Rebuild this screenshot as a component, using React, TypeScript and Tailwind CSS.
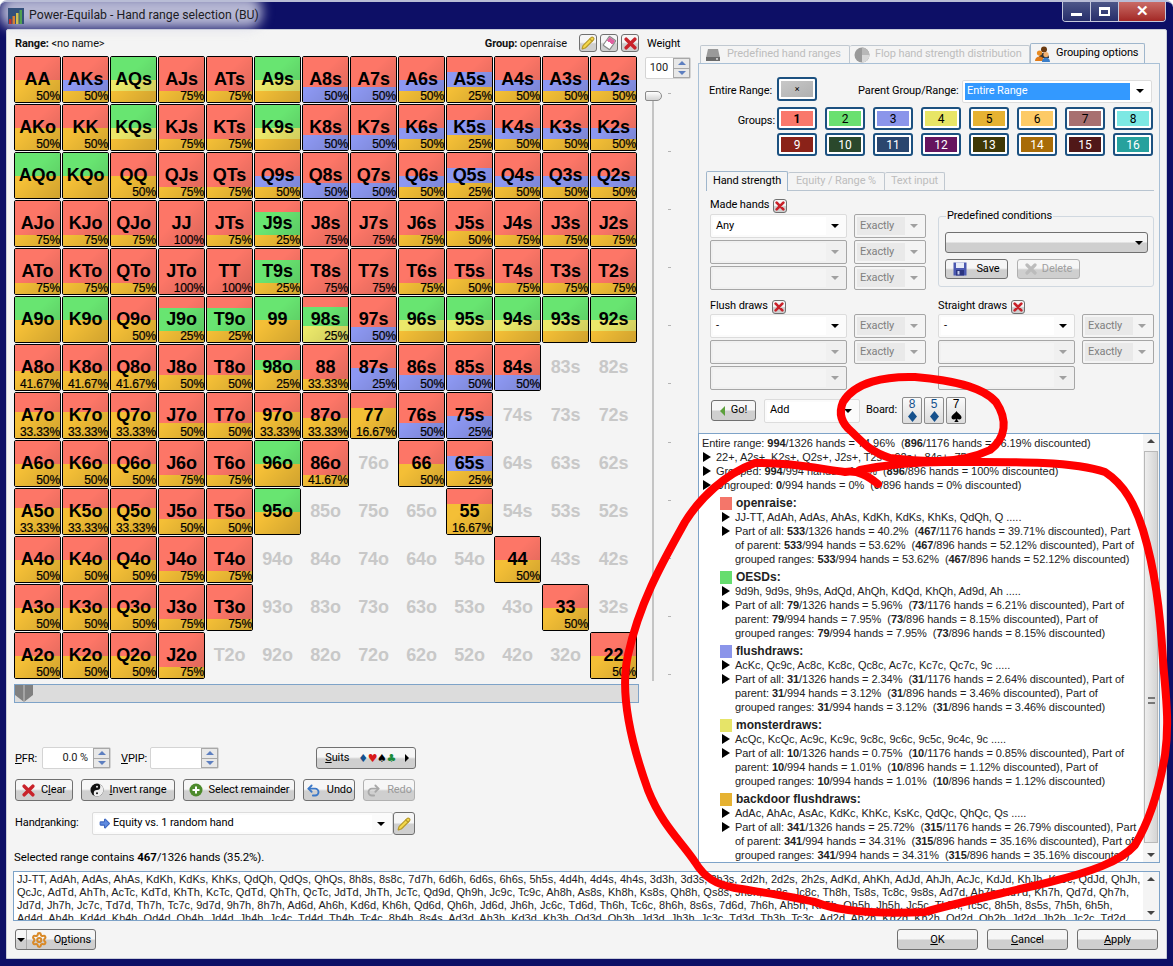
import type { ReactNode } from 'react';
import { ArrowBigRight, Pencil, Redo2, Settings, Undo2 } from 'lucide-react';

const BAND: Record<string, string> = {
  R: 'bg-[#fd7667]',
  G: 'bg-[#68e571]',
  B: 'bg-[#8d98f2]',
  Y: 'bg-[#ebe86a]',
  O: 'bg-[#f4bf36]',
};

// preset fills for the matrix cells, top to bottom
const FILLS: Record<string, [string, number][]> = {
  a: [['R', 50], ['O', 50]],
  b: [['R', 50], ['B', 25], ['O', 25]],
  c: [['G', 50], ['Y', 25], ['O', 25]],
  d: [['R', 75], ['O', 25]],
  e: [['R', 67], ['B', 33]],
  f: [['R', 33], ['B', 33], ['O', 34]],
  g: [['G', 50], ['O', 50]],
  h: [['R', 100]],
  i: [['R', 25], ['G', 50], ['O', 25]],
  j: [['R', 67], ['O', 33]],
  k: [['R', 57], ['O', 43]],
  l: [['R', 43], ['O', 57]],
  n: [['R', 33], ['O', 67]],
  o: [['R', 50], ['B', 50]],
  p: [['R', 33], ['G', 22], ['O', 45]],
  q: [['R', 22], ['G', 43], ['Y', 35]],
  r: [['R', 55], ['O', 45]],
};

const MATRIX = [
  'AA:50:a AKs:50:b AQs::c AJs:75:d ATs:75:d A9s::c A8s:50:e A7s:50:e A6s:50:b A5s:25:f A4s:50:b A3s:50:b A2s:50:b',
  'AKo:50:a KK:50:a KQs::c KJs:75:d KTs:75:d K9s::c K8s:50:e K7s:50:e K6s:50:b K5s:25:f K4s:50:b K3s:50:b K2s:50:b',
  'AQo::g KQo::g QQ:50:a QJs:75:d QTs:75:d Q9s:50:b Q8s:50:e Q7s:50:e Q6s:50:b Q5s:25:f Q4s:50:b Q3s:50:b Q2s:50:b',
  'AJo:75:d KJo:75:d QJo:75:d JJ:100:h JTs:75:d J9s:25:i J8s:75:h J7s:75:h J6s:75:d J5s:50:j J4s:75:d J3s:75:d J2s:75:d',
  'ATo:75:d KTo:75:d QTo:75:d JTo:100:h TT:100:h T9s:25:i T8s:75:h T7s:75:h T6s:75:d T5s:50:j T4s:75:d T3s:75:d T2s:75:d',
  'A9o::g K9o::g Q9o:50:a J9o:25:i T9o:25:i 99::g 98s:25:q 97s:50:e 96s::c 95s::c 94s::c 93s::c 92s::c',
  'A8o:41.67:k K8o:41.67:k Q8o:41.67:k J8o:50:j T8o:50:j 98o:25:p 88:33.33:d 87s:25:o 86s:50:e 85s:50:e 84s:50:e 83s:: 82s::',
  'A7o:33.33:l K7o:33.33:l Q7o:33.33:l J7o:50:j T7o:50:j 97o:33.33:l 87o:33.33:r 77:16.67:n 76s:50:e 75s:25:o 74s:: 73s:: 72s::',
  'A6o:50:a K6o:50:a Q6o:50:a J6o:75:d T6o:75:d 96o::g 86o:41.67:d 76o:: 66:50:a 65s:25:f 64s:: 63s:: 62s::',
  'A5o:33.33:l K5o:33.33:l Q5o:33.33:l J5o:50:j T5o:50:j 95o::g 85o:: 75o:: 65o:: 55:16.67:n 54s:: 53s:: 52s::',
  'A4o:50:a K4o:50:a Q4o:50:a J4o:75:d T4o:75:d 94o:: 84o:: 74o:: 64o:: 54o:: 44:50:a 43s:: 42s::',
  'A3o:50:a K3o:50:a Q3o:50:a J3o:75:d T3o:75:d 93o:: 83o:: 73o:: 63o:: 53o:: 43o:: 33:50:a 32s::',
  'A2o:50:a K2o:50:a Q2o:50:a J2o:75:d T2o:: 92o:: 82o:: 72o:: 62o:: 52o:: 42o:: 32o:: 22:50:a',
];

const GROUPS = [
  ['1', 'bg-[#f9786b]', 'text-black font-bold'],
  ['2', 'bg-[#6ae070]', 'text-black'],
  ['3', 'bg-[#8b95ea]', 'text-black'],
  ['4', 'bg-[#e8e566]', 'text-black'],
  ['5', 'bg-[#e6b232]', 'text-black'],
  ['6', 'bg-[#fdca66]', 'text-black'],
  ['7', 'bg-[#a87070]', 'text-black'],
  ['8', 'bg-[#7de8e3]', 'text-black'],
  ['9', 'bg-[#8a2218]', 'text-white'],
  ['10', 'bg-[#2a482c]', 'text-white'],
  ['11', 'bg-[#2a466e]', 'text-white'],
  ['12', 'bg-[#65145e]', 'text-white'],
  ['13', 'bg-[#3f3806]', 'text-white'],
  ['14', 'bg-[#a86c08]', 'text-white'],
  ['15', 'bg-[#501818]', 'text-white'],
  ['16', 'bg-[#26a19d]', 'text-white'],
];

const BLOCKS = [
  {
    name: 'openraise:',
    color: 'bg-[#f4766a]',
    hands: 'JJ-TT, AdAh, AdAs, AhAs, KdKh, KdKs, KhKs, QdQh, Q .....',
    lines: [
      'Part of all: *533*/1326 hands = 40.2%  (*467*/1176 hands = 39.71% discounted), Part',
      'of parent: *533*/994 hands = 53.62%  (*467*/896 hands = 52.12% discounted), Part of',
      'grouped ranges: *533*/994 hands = 53.62%  (*467*/896 hands = 52.12% discounted)',
    ],
  },
  {
    name: 'OESDs:',
    color: 'bg-[#66dd6e]',
    hands: '9d9h, 9d9s, 9h9s, AdQd, AhQh, KdQd, KhQh, Ad9d, Ah .....',
    lines: [
      'Part of all: *79*/1326 hands = 5.96%  (*73*/1176 hands = 6.21% discounted), Part of',
      'parent: *79*/994 hands = 7.95%  (*73*/896 hands = 8.15% discounted), Part of',
      'grouped ranges: *79*/994 hands = 7.95%  (*73*/896 hands = 8.15% discounted)',
    ],
  },
  {
    name: 'flushdraws:',
    color: 'bg-[#8b95ea]',
    hands: 'AcKc, Qc9c, Ac8c, Kc8c, Qc8c, Ac7c, Kc7c, Qc7c, 9c .....',
    lines: [
      'Part of all: *31*/1326 hands = 2.34%  (*31*/1176 hands = 2.64% discounted), Part of',
      'parent: *31*/994 hands = 3.12%  (*31*/896 hands = 3.46% discounted), Part of',
      'grouped ranges: *31*/994 hands = 3.12%  (*31*/896 hands = 3.46% discounted)',
    ],
  },
  {
    name: 'monsterdraws:',
    color: 'bg-[#e6e468]',
    hands: 'AcQc, KcQc, Ac9c, Kc9c, 9c8c, 9c6c, 9c5c, 9c4c, 9c .....',
    lines: [
      'Part of all: *10*/1326 hands = 0.75%  (*10*/1176 hands = 0.85% discounted), Part of',
      'parent: *10*/994 hands = 1.01%  (*10*/896 hands = 1.12% discounted), Part of',
      'grouped ranges: *10*/994 hands = 1.01%  (*10*/896 hands = 1.12% discounted)',
    ],
  },
  {
    name: 'backdoor flushdraws:',
    color: 'bg-[#e6b232]',
    hands: 'AdAc, AhAc, AsAc, KdKc, KhKc, KsKc, QdQc, QhQc, Qs .....',
    lines: [
      'Part of all: *341*/1326 hands = 25.72%  (*315*/1176 hands = 26.79% discounted), Part',
      'of parent: *341*/994 hands = 34.31%  (*315*/896 hands = 35.16% discounted), Part of',
      'grouped ranges: *341*/994 hands = 34.31%  (*315*/896 hands = 35.16% discounted)',
    ],
  },
];

const RANGE_TEXT = [
  'JJ-TT, AdAh, AdAs, AhAs, KdKh, KdKs, KhKs, QdQh, QdQs, QhQs, 8h8s, 8s8c, 7d7h, 6d6h, 6d6s, 6h6s, 5h5s, 4d4h, 4d4s, 4h4s, 3d3h, 3d3s, 3h3s, 2d2h, 2d2s, 2h2s, AdKd, AhKh, AdJd, AhJh, AcJc, KdJd, KhJh, KcJc, QdJd, QhJh,',
  'QcJc, AdTd, AhTh, AcTc, KdTd, KhTh, KcTc, QdTd, QhTh, QcTc, JdTd, JhTh, JcTc, Qd9d, Qh9h, Jc9c, Tc9c, Ah8h, As8s, Kh8h, Ks8s, Qh8h, Qs8s, Jh8h, Js8s, Jc8c, Th8h, Ts8s, Tc8c, 9s8s, Ad7d, Ah7h, Kd7d, Kh7h, Qd7d, Qh7h,',
  'Jd7d, Jh7h, Jc7c, Td7d, Th7h, Tc7c, 9d7d, 9h7h, 8h7h, Ad6d, Ah6h, Kd6d, Kh6h, Qd6d, Qh6h, Jd6d, Jh6h, Jc6c, Td6d, Th6h, Tc6c, 8h6h, 8s6s, 7d6d, 7h6h, Ah5h, Kh5h, Qh5h, Jh5h, Jc5c, Th5h, Tc5c, 8h5h, 8s5s, 7h5h, 6h5h,',
  'Ad4d, Ah4h, Kd4d, Kh4h, Qd4d, Qh4h, Jd4d, Jh4h, Jc4c, Td4d, Th4h, Tc4c, 8h4h, 8s4s, Ad3d, Ah3h, Kd3d, Kh3h, Qd3d, Qh3h, Jd3d, Jh3h, Jc3c, Td3d, Th3h, Tc3c, Ad2d, Ah2h, Kd2d, Kh2h, Qd2d, Qh2h, Jd2d, Jh2h, Jc2c, Td2d',
];

const BTN = 'flex items-center justify-center whitespace-nowrap rounded-[3px] border border-[#707070] bg-linear-to-b from-[#f6f6f6] from-45% to-[#cfcfcf] to-55%';

function Cell({ spec }: { spec: string }) {
  const [label, pct, fill] = spec.split(':');
  if (!fill) {
    return (
      <div className="flex h-[47px] w-[47px] items-center justify-center font-['Liberation_Sans'] text-[18px] font-bold text-[#c8c8c8]">
        {label}
      </div>
    );
  }
  return (
    <div className="relative flex h-[47px] w-[47px] flex-col overflow-hidden rounded-[2px] border border-black">
      {FILLS[fill].map(([c, h], i) => (
        <div key={i} className={BAND[c]} style={{ height: `${h}%` }} />
      ))}
      <div className="absolute inset-0 bg-linear-to-br from-transparent from-40% to-black/15" />
      <div className="absolute inset-0 flex items-center justify-center pb-[1px] font-['Liberation_Sans'] text-[18px] font-bold text-black">
        {label}
      </div>
      {pct && (
        <div className="absolute right-0 bottom-[-1px] font-['Liberation_Sans'] text-[12px] leading-[14px] text-black [-webkit-text-stroke:0.2px_black]">
          {pct}%
        </div>
      )}
    </div>
  );
}

function RedX({ size = 12, grey = false }: { size?: number; grey?: boolean }) {
  return (
    <svg width={size} height={size} viewBox="0 0 12 12">
      <path d="M2 2 L10 10 M10 2 L2 10" stroke={grey ? '#bcbcbc' : '#c9222a'} strokeWidth="3.2" strokeLinecap="round" />
    </svg>
  );
}

function XBtn() {
  return (
    <div className={`${BTN} h-[14px] w-[14px] shrink-0 border-[#8a8a8a]`}>
      <RedX size={10} />
    </div>
  );
}

function Arrow({ grey = false }: { grey?: boolean }) {
  return (
    <div className={`h-0 w-0 border-x-[4.5px] border-t-[4px] border-x-transparent ${grey ? 'border-t-[#a0a0a0]' : 'border-t-black'}`} />
  );
}

function Combo({ text, enabled = false, w = 'w-[137px]', h = 'h-[24px]' }: { text?: string; enabled?: boolean; w?: string; h?: string }) {
  return (
    <div className={`${w} ${h} flex items-center rounded-[2px] border p-[2px] ${enabled ? 'border-[#dcdcdc] bg-[#fbfbfb]' : 'border-[#a6a6a6] bg-[#f0f0f0]'}`}>
      <div className={`flex h-full flex-1 items-center pl-[3px] ${enabled ? 'bg-white' : 'bg-[#f4f4f4]'}`}>{text}</div>
      <div className="flex w-[18px] justify-center">
        <Arrow grey={!enabled} />
      </div>
    </div>
  );
}

function Exactly() {
  return (
    <div className="flex h-[24px] w-[72px] items-center rounded-[2px] border border-[#a6a6a6] bg-[#f4f4f4] p-[2px]">
      <div className="flex h-full flex-1 items-center bg-[#e9e9e9] pl-[3px] text-[#7f7f7f]">Exactly</div>
      <div className="flex w-[18px] justify-center">
        <Arrow grey />
      </div>
    </div>
  );
}

function ComboRow({ text, enabled, exact = true }: { text?: string; enabled?: boolean; exact?: boolean }) {
  return (
    <div className="flex gap-[7px]">
      <Combo text={text} enabled={enabled} />
      {exact && <Exactly />}
    </div>
  );
}

function Spin({ text, w }: { text?: string; w: string }) {
  return (
    <div className={`flex h-[22px] ${w} rounded-[2px] border border-[#d4d4d4] bg-white`}>
      <div className="flex flex-1 items-center justify-end pr-[5px] text-[#222]">{text}</div>
      <div className="flex w-[17px] flex-col border border-[#a8a8a8] bg-[#e8e8e8]">
        <div className="flex flex-1 items-center justify-center border-b border-[#a8a8a8]">
          <div className="h-0 w-0 border-x-[4px] border-b-[4px] border-x-transparent border-b-[#5d7fc0]" />
        </div>
        <div className="flex flex-1 items-center justify-center">
          <div className="h-0 w-0 border-x-[4px] border-t-[4px] border-x-transparent border-t-[#5d7fc0]" />
        </div>
      </div>
    </div>
  );
}

function Rich({ text }: { text: string }) {
  const parts = text.split('*');
  return (
    <>
      {parts.map((p, i) => (i % 2 ? <b key={i}>{p}</b> : <span key={i}>{p}</span>))}
    </>
  );
}

function Tri() {
  return <div className="h-0 w-0 border-y-[5px] border-l-[8px] border-y-transparent border-l-black" />;
}

function ListLine({ text, tri = false, indent = 'pl-[3px]' }: { text: string; tri?: boolean; indent?: string }) {
  return (
    <div className={`flex h-[14px] items-center whitespace-pre ${indent}`}>
      {tri && <div className="w-[13px] shrink-0"><Tri /></div>}
      <div>
        <Rich text={text} />
      </div>
    </div>
  );
}

function PencilBtn({ cls }: { cls: string }) {
  return (
    <div className={`${BTN} ${cls} border-[#8a8a8a]`}>
      <Pencil size={14} className="fill-[#f5d94a] text-[#b89a2a]" />
    </div>
  );
}

function Yin() {
  return (
    <svg width="14" height="14" viewBox="0 0 14 14">
      <circle cx="7" cy="7" r="6.5" fill="#111" />
      <path d="M7 .5a6.500 6.500 0 0 1 0 13a3.250 3.250 0 0 1 0-6.500a3.250 3.250 0 0 0 0-6.500z" fill="#eee" />
      <circle cx="7" cy="3.800" r="1" fill="#eee" />
      <circle cx="7" cy="10.200" r="1" fill="#111" />
    </svg>
  );
}

function PlusGreen() {
  return (
    <svg width="14" height="14" viewBox="0 0 14 14">
      <circle cx="7" cy="7" r="6.5" fill="#4d8a2c" />
      <path d="M7 3.5v7M3.5 7h7" stroke="#fff" strokeWidth="2" />
    </svg>
  );
}

function Floppy() {
  return (
    <svg width="14" height="14" viewBox="0 0 14 14">
      <rect x="0.5" y="0.5" width="13" height="13" fill="#4a58b0" />
      <rect x="3" y="0.5" width="8" height="5.5" fill="#e8ecf8" />
      <rect x="3" y="8" width="8" height="5.5" fill="#2b3580" />
      <rect x="4.5" y="9" width="2" height="3.5" fill="#c8cfee" />
    </svg>
  );
}

function AppIcon() {
  return (
    <svg width="16" height="16" viewBox="0 0 16 16">
      <rect width="16" height="16" fill="#33507a" />
      <rect x="1" y="11" width="2.5" height="5" fill="#c03030" />
      <rect x="4.5" y="8" width="2.5" height="8" fill="#d88030" />
      <rect x="8" y="5" width="2.5" height="11" fill="#d0c050" />
      <rect x="11.5" y="2" width="2.5" height="14" fill="#50a050" />
    </svg>
  );
}

function DiskIcon() {
  return (
    <svg width="16" height="14" viewBox="0 0 16 14">
      <path d="M3 1h10l2 9v3H1v-3z" fill="#9a9a9a" />
      <rect x="1" y="9" width="14" height="4" fill="#6b6b6b" />
      <rect x="11" y="10.200" width="2" height="1.500" fill="#ddd" />
    </svg>
  );
}

function PieIcon() {
  return (
    <svg width="16" height="16" viewBox="0 0 16 16">
      <circle cx="8" cy="8" r="7.5" fill="#9a9a9a" />
      <path d="M8 8h7.500a7.500 7.500 0 0 1-7.500 7.500z" fill="#d8d8d8" />
      <path d="M8 8V.5a7.500 7.500 0 0 1 7.500 7.500z" fill="#b8b8b8" />
    </svg>
  );
}

function PeopleIcon() {
  return (
    <svg width="16" height="16" viewBox="0 0 16 16">
      <circle cx="9" cy="3.5" r="3" fill="#6b3a10" />
      <path d="M4 12c0-3 2-5 5-5s5 2 5 5z" fill="#333" />
      <circle cx="4.5" cy="7" r="2.6" fill="#e88a20" />
      <path d="M0 15c0-3 2-4.500 4.500-4.500S9 12 9 15z" fill="#e07a18" />
      <circle cx="11" cy="8.5" r="2.6" fill="#f0b070" />
      <path d="M7 16c0-3 1.800-4.500 4-4.500s4 1.500 4 4.500z" fill="#3a7ec8" />
    </svg>
  );
}

function SuitShape({ suit, color }: { suit: 'd' | 's'; color: string }) {
  return (
    <svg width="11" height="11" viewBox="0 0 11 11" fill={color}>
      {suit === 'd' ? (
        <path d="M5.5 0L10 5.500L5.500 11L1 5.500Z" />
      ) : (
        <path d="M5.500 0C7 2.500 10.500 4 10.500 6.500C10.500 8.500 8 9 6.200 7.800C6.300 9 6.800 10 7.800 11H3.200C4.200 10 4.700 9 4.800 7.800C3 9 .5 8.500.5 6.500C.5 4 4 2.500 5.500 0Z" />
      )}
    </svg>
  );
}

function Card({ rank, suit, color, hex }: { rank: string; suit: 'd' | 's'; color: string; hex: string }) {
  return (
    <div className={`flex h-[27px] w-[20px] flex-col items-center rounded-[2px] border border-[#8c8c8c] bg-linear-to-b from-[#fafafa] to-[#dcdcdc] font-['Liberation_Sans'] ${color}`}>
      <span className="h-[13px] text-[12px] leading-[13px]">{rank}</span>
      <SuitShape suit={suit} color={hex} />
    </div>
  );
}

function Scroll({ long = false }: { long?: boolean }) {
  return (
    <div className="flex w-[16px] flex-col items-center bg-[#f4f4f4]">
      <div className="flex h-[14px] items-center">
        <div className="h-0 w-0 border-x-[4px] border-b-[4px] border-x-transparent border-b-[#444]" />
      </div>
      <div className="flex flex-1 w-full flex-col">
        {long && (
          <div className="mx-px mt-[3px] flex h-[392px] items-center justify-center border border-[#b8b8b8] bg-linear-to-r from-[#eee] to-[#d4d4d4] pt-[106px]">
            <div className="h-[7px] w-[7px] border-y-2 border-[#777]" />
          </div>
        )}
      </div>
      <div className="flex h-[14px] items-center">
        <div className="h-0 w-0 border-x-[4px] border-t-[4px] border-x-transparent border-t-[#444]" />
      </div>
    </div>
  );
}

function Controls({ children, cls }: { children: ReactNode; cls: string }) {
  return <div className={`${BTN} ${cls} h-[22px] gap-[6px]`}>{children}</div>;
}

export default function App() {
  const rows = MATRIX.map((r) => r.split(' '));

  return (
    <div className="relative flex h-[966px] w-[1173px] flex-col overflow-hidden rounded-t-[7px] border-t-2 border-[#b9bdd6] bg-[#0d0f66] font-['Roboto',sans-serif] text-[11px] tracking-[-0.1px] text-black">
      {/* title bar */}
      <div className="relative flex h-[27px] shrink-0 items-center pl-[8px]">
        <div className="absolute top-[-6px] left-0 h-[32px] w-[262px] rounded-[14px] bg-[#d4d5e6]/85 blur-[6px]" />
        <div className="relative"><AppIcon /></div>
        <span className="relative ml-[5px] mt-[-1px] text-[12.25px] tracking-normal text-[#1c1c24]">Power-Equilab - Hand range selection (BU)</span>
        <div className="ml-auto mr-[7px] flex h-[20px] self-start overflow-hidden rounded-b-[4px] border border-t-0 border-[#c5c8dc]">
          <div className="flex w-[28px] items-center justify-center border-r border-[#c5c8dc] bg-linear-to-b from-[#4d5688] to-[#272d6a]">
            <div className="mt-[5px] h-[3px] w-[11px] bg-white" />
          </div>
          <div className="flex w-[28px] items-center justify-center border-r border-[#c5c8dc] bg-linear-to-b from-[#4d5688] to-[#272d6a]">
            <div className="h-[9px] w-[11px] border-2 border-t-[3px] border-white" />
          </div>
          <div className="flex w-[46px] items-center justify-center bg-linear-to-b from-[#c96a66] to-[#a22624] text-[15px] font-bold leading-none text-white">
            ✕
          </div>
        </div>
      </div>

      {/* client area */}
      <div className="ml-[6px] h-[930px] w-[1161px] shrink-0 rounded-t-[2px] border border-[#c8ccd8] bg-[#f4f4f4]">
        <div className="flex h-[834px]">
          {/* left column */}
          <div className="ml-[7px] flex w-[626px] flex-col">
            <div className="mt-[4px] flex h-[18px] items-center pl-px">
              <span className="pt-[2px] text-[#111]"><b>Range:</b> &lt;no name&gt;</span>
              <span className="ml-auto pt-[2px] text-[#111]"><b>Group:</b> openraise</span>
              <PencilBtn cls="ml-[12px] h-[18px] w-[18px]" />
              <div className={`${BTN} ml-[3px] h-[18px] w-[18px] border-[#8a8a8a]`}>
                <div className="h-[12px] w-[9px] rotate-[35deg] rounded-[1px] border border-[#888] bg-linear-to-b from-[#e060a0] from-45% to-white to-45%" />
              </div>
              <div className={`${BTN} ml-[3px] mr-[1px] h-[18px] w-[18px] border-[#8a8a8a]`}>
                <RedX size={13} />
              </div>
            </div>
            <div className="mt-[4px] grid grid-cols-[repeat(13,47px)] gap-px">
              {rows.flat().map((s) => (
                <Cell key={s} spec={s} />
              ))}
            </div>
            <div className="mt-[5px] h-[19px] w-[625px] border border-[#7ea3c8] bg-[#dcdcdc]">
              <svg width="18" height="18" viewBox="0 0 18 18" className="block">
                <path d="M0 0H18V10L9 17L0 10Z" fill="#808080" />
                <path d="M9 0V17" stroke="#c8c8c8" strokeWidth="1" />
              </svg>
            </div>

            <div className="mt-[44px] flex h-[22px] items-center pl-px">
              <span className="w-[27px] pt-[2px]"><u>P</u>FR:</span>
              <Spin text="0.0 %" w="w-[69px]" />
              <span className="ml-[10px] w-[29px] pt-[2px]"><u>V</u>PIP:</span>
              <Spin w="w-[69px]" />
              <div className={`${BTN} ml-[97px] h-[22px] w-[100px] gap-[9px] pl-[2px]`}>
                <span className="pt-px"><u>S</u>uits</span>
                <span className="font-['DejaVu_Sans'] text-[11px] leading-none tracking-[-0.5px]">
                  <span className="text-[#14508c]">♦</span>
                  <span className="text-[#d81818]">♥</span>
                  <span className="text-black">♠</span>
                  <span className="text-[#1a8a3a]">♣</span>
                </span>
                <div className="h-0 w-0 border-y-[4px] border-l-[4px] border-y-transparent border-l-black" />
              </div>
            </div>

            <div className="mt-[10px] flex h-[22px] items-center gap-[8px] pl-px">
              <Controls cls="w-[58px]"><RedX size={13} /><span className="pt-px">C<u>l</u>ear</span></Controls>
              <Controls cls="w-[94px]"><Yin /><span className="pt-px"><u>I</u>nvert range</span></Controls>
              <Controls cls="w-[112px]"><PlusGreen /><span className="pt-px">Select remainder</span></Controls>
              <Controls cls="w-[52px] gap-[4px]"><Undo2 size={15} strokeWidth={3} className="text-[#3b78c8]" /><span className="pt-px">Undo</span></Controls>
              <Controls cls="w-[52px] gap-[4px] border-[#b0b0b0] text-[#9a9a9a]"><Redo2 size={15} strokeWidth={3} className="text-[#a8a8a8]" /><span className="pt-px">Redo</span></Controls>
            </div>

            <div className="mt-[11px] flex h-[23px] items-center pl-px">
              <span className="w-[77px]">Hand<u>r</u>anking:</span>
              <div className="flex h-[23px] w-[301px] items-center rounded-[2px] border border-[#dcdcdc] bg-[#fbfbfb] p-[2px]">
                <div className="flex h-full flex-1 items-center gap-[2px] bg-white pl-[3px]">
                  <ArrowBigRight size={13} className="fill-[#5f8be0] text-[#3c66c0]" />
                  <span>Equity vs. 1 random hand</span>
                </div>
                <div className="flex w-[18px] justify-center"><Arrow /></div>
              </div>
              <PencilBtn cls="h-[23px] w-[22px]" />
            </div>

            <div className="mt-[15px] h-[13px] whitespace-nowrap text-[11.5px] leading-[14px]">
              Selected range contains <b>467</b>/1326 hands (35.2%).
            </div>
          </div>

          {/* weight column */}
          <div className="ml-[5px] flex w-[46px] flex-col">
            <div className="mt-[7px] h-[14px] pl-[2px] leading-[14px]">Weight</div>
            <div className="mt-[6px]"><Spin text="100" w="w-[46px]" /></div>
            <div className="relative ml-[7px] mt-[12px] flex h-[590px]">
              <div className="h-full w-[2px] bg-[#c4c4c4]" />
              <div className="ml-[14px] flex h-[584px] flex-col justify-between pt-[2px]">
                {[...Array(11)].map((_, i) => (
                  <div key={i} className="h-px w-[3px] bg-[#b4b4b4]" />
                ))}
              </div>
              <div className="absolute top-0 left-[-7px] h-[10px] w-[17px] rounded-r-[5px] rounded-l-[2px] border border-[#8a8a8a] bg-linear-to-b from-white to-[#d4d4d4]" />
            </div>
          </div>

          {/* right column */}
          <div className="ml-[7px] flex w-[462px] flex-col whitespace-nowrap">
            <div className="mt-[13px] flex h-[20px] items-end pl-[2px]">
              <div className="flex h-[18px] w-[150px] items-center gap-[6px] rounded-t-[2px] border border-b-0 border-[#c0c8d0] pl-[4px] text-[#bdbdbd]">
                <DiskIcon /> <span>Predefined hand ranges</span>
              </div>
              <div className="flex h-[18px] w-[180px] items-center gap-[5px] rounded-t-[2px] border border-b-0 border-l-0 border-[#c0c8d0] pl-[4px] text-[#bdbdbd]">
                <PieIcon /> <span>Flop hand strength distribution</span>
              </div>
              <div className="flex h-[20px] w-[115px] items-center gap-[5px] rounded-t-[2px] border border-b-0 border-[#9fb6cc] pl-[4px]">
                <PeopleIcon /> <span>Grouping options</span>
              </div>
            </div>

            <div className="flex h-[370px] flex-col overflow-hidden border border-[#a9c0d6] border-b-0">
              <div className="mt-[13px] flex h-[24px] items-center">
                <span className="ml-[10px] w-[68px] pt-[5px]">Entire Range:</span>
                <div className="flex h-[24px] w-[40px] rounded-[3px] border-2 border-[#1c5180] bg-white p-[2px]">
                  <div className="flex flex-1 items-center justify-center bg-linear-to-br from-[#c8c8c8] to-[#b0b0b0] text-[9px] leading-none">×</div>
                </div>
                <span className="ml-[41px] w-[104px] pt-[5px]">Parent Group/Range:</span>
                <div className="mt-[4px] flex h-[23px] w-[190px] items-center rounded-[2px] border border-[#dcdcdc] bg-white p-[2px]">
                  <div className="flex h-full flex-1 items-center bg-[#3399ff] pl-[2px] text-white">Entire Range</div>
                  <div className="flex w-[19px] justify-center"><Arrow /></div>
                </div>
              </div>

              <div className="mt-[6px] flex">
                <div className="mr-[2px] flex h-[23px] w-[76px] items-center justify-end pt-[6px]">Groups:</div>
                <div className="grid grid-cols-[repeat(8,40px)] gap-x-[8px] gap-y-[3px]">
                  {GROUPS.map(([n, bg, fg]) => (
                    <div key={n} className="flex h-[23px] rounded-[3px] border-2 border-[#1c5180] bg-white p-[2px]">
                      <div className={`flex flex-1 items-center justify-center text-[12px] leading-none ${bg} ${fg}`}>{n}</div>
                    </div>
                  ))}
                </div>
              </div>

              <div className="ml-[7px] mr-[5px] mt-[15px] flex h-[20px] items-end border-b border-[#b8c4d0]">
                <div className="flex h-[20px] w-[82px] translate-y-px items-center justify-center rounded-t-[2px] border border-b-0 border-[#9fb6cc] bg-[#f4f4f4]">Hand strength</div>
                <div className="flex h-[18px] w-[97px] items-center justify-center rounded-t-[2px] border border-b-0 border-l-0 border-[#c0c8d0] text-[#bdbdbd]">Equity / Range %</div>
                <div className="flex h-[18px] w-[60px] items-center justify-center rounded-t-[2px] border border-b-0 border-l-0 border-[#c0c8d0] text-[#bdbdbd]">Text input</div>
              </div>

              <div className="ml-[11px] mt-[6px] flex">
                <div className="w-[216px]">
                  <div className="flex h-[17px] items-end gap-[4px] pb-px"><span>Made hands</span><XBtn /></div>
                  <div className="flex flex-col gap-[2px]">
                    <ComboRow text="Any" enabled />
                    <ComboRow />
                    <ComboRow />
                  </div>
                </div>
                <div className="relative ml-[12px] mt-[19px] h-[71px] w-[216px] rounded-[3px] border border-[#d0d8e0] pl-[6px] pt-[15px]">
                  <div className="absolute top-[-8px] left-[7px] bg-[#f4f4f4] px-px leading-[14px]">Predefined conditions</div>
                  <div className="flex h-[21px] w-[203px] items-center justify-end rounded-[3px] border border-[#707070] bg-linear-to-b from-[#f6f6f6] from-45% to-[#cfcfcf] to-55% pr-[4px]">
                    <Arrow />
                  </div>
                  <div className="mt-[6px] flex gap-[9px]">
                    <div className={`${BTN} h-[20px] w-[63px] gap-[9px]`}><Floppy /><span>Save</span></div>
                    <div className={`${BTN} h-[20px] w-[63px] gap-[5px] border-[#b0b0b0] text-[#a0a0a0]`}><RedX size={12} grey /><span>Delete</span></div>
                  </div>
                </div>
              </div>

              <div className="ml-[11px] mt-[7px] flex gap-[12px]">
                <div className="w-[216px]">
                  <div className="flex h-[17px] items-end gap-[4px]"><span>Flush draws</span><XBtn /></div>
                  <div className="flex flex-col gap-[2px]">
                    <ComboRow text="-" enabled />
                    <ComboRow />
                    <ComboRow exact={false} />
                  </div>
                </div>
                <div className="w-[216px]">
                  <div className="flex h-[17px] items-end gap-[4px]"><span>Straight draws</span><XBtn /></div>
                  <div className="flex flex-col gap-[2px]">
                    <ComboRow text="-" enabled />
                    <ComboRow />
                    <ComboRow exact={false} />
                  </div>
                </div>
              </div>

              <div className="ml-[12px] mt-[7px] flex h-[27px] items-center">
                <div className={`${BTN} h-[21px] w-[45px] gap-[6px]`}>
                  <div className="h-0 w-0 border-y-[5px] border-r-[5px] border-y-transparent border-r-[#5ca03c]" />
                  <span>Go!</span>
                </div>
                <Combo text="Add" enabled w="ml-[8px] w-[96px]" />
                <span className="ml-[6px] mr-[5px]">Board:</span>
                <div className="flex gap-[2px]">
                  <Card rank="8" suit="d" color="text-[#14508c]" hex="#14508c" />
                  <Card rank="5" suit="d" color="text-[#14508c]" hex="#14508c" />
                  <Card rank="7" suit="s" color="text-black" hex="#000" />
                </div>
              </div>
            </div>

            {/* list */}
            <div className="flex h-[430px] border border-[#7ea3c8] bg-white font-['Liberation_Sans'] text-[11px] leading-[14px] tracking-[-0.05px] text-[#222]">
              <div className="flex-1 overflow-hidden pt-[2px]">
                <ListLine text="Entire range: *994*/1326 hands = 74.96%  (*896*/1176 hands = 76.19% discounted)" />
                <ListLine tri text="22+, A2s+, K2s+, Q2s+, J2s+, T2s+, 92s+, 84s+, 75s+ ....." indent="pl-[4px]" />
                <ListLine tri text="Grouped: *994*/994 hands = 100%  (*896*/896 hands = 100% discounted)" indent="pl-[4px]" />
                <ListLine tri text="Ungrouped: *0*/994 hands = 0%  (*0*/896 hands = 0% discounted)" indent="pl-[4px]" />
                {BLOCKS.map((b) => (
                  <div key={b.name} className="ml-[21px] mt-[4px]">
                    <div className="flex h-[14px] items-center">
                      <div className={`h-[13px] w-[12px] ${b.color}`} />
                      <b className="ml-[4px] text-[12px] tracking-normal">{b.name}</b>
                    </div>
                    <ListLine tri text={b.hands} indent="pl-[2px]" />
                    <ListLine tri text={b.lines[0]} indent="pl-[2px]" />
                    <ListLine text={b.lines[1]} indent="pl-[15px]" />
                    <ListLine text={b.lines[2]} indent="pl-[15px]" />
                  </div>
                ))}
              </div>
              <Scroll long />
            </div>
          </div>
        </div>

        {/* hand list */}
        <div className="ml-[6px] mt-[7px] flex h-[50px] w-[1147px] overflow-hidden border border-[#7ea3c8] bg-white text-[11px] leading-[13px]">
          <div className="flex-1 overflow-hidden pl-[3px] pt-[1px] font-['Liberation_Sans'] tracking-normal text-[#222]">
            {RANGE_TEXT.map((t, i) => (
              <div key={i} className="whitespace-nowrap">{t}</div>
            ))}
          </div>
          <Scroll />
        </div>

        {/* footer */}
        <div className="mt-[8px] flex h-[21px] items-center pl-[8px] pr-[8px]">
          <div className={`${BTN} h-[21px] w-[81px]`}>
            <div className="flex h-full w-[12px] items-center justify-center border-r border-[#aaa]">
              <Arrow />
            </div>
            <Settings size={18} strokeWidth={3} className="ml-[4px] text-[#d98a28]" />
            <span className="ml-[6px] mr-[4px] pt-px">O<u>p</u>tions</span>
          </div>
          <div className={`${BTN} ml-auto h-[21px] w-[81px] border-[#3c8cc0] pt-px`}><u>O</u>K</div>
          <div className={`${BTN} ml-[9px] h-[21px] w-[81px] pt-px`}><u>C</u>ancel</div>
          <div className={`${BTN} ml-[9px] h-[21px] w-[81px] pt-px`}><u>A</u>pply</div>
        </div>
      </div>

      {/* marker scribbles drawn on the screenshot */}
      <svg className="pointer-events-none absolute top-[-2px] left-0" width="1173" height="966" viewBox="0 0 1173 966" fill="none">
        <path
          d="M852 432 C866 446 872 452 890 458 C925 462 960 464 990 450 C1006 438 1008 420 996 402 C982 386 950 380 915 377 C885 376 855 382 843 402 C838 414 842 424 852 432"
          stroke="#ff0000" strokeWidth="8" strokeLinecap="round" strokeLinejoin="round"
        />
        <path
          d="M878 484 C868 476 858 470 845 472 C815 468 785 462 755 463 C725 474 700 498 685 522 C665 558 640 600 628 655 C620 690 630 740 648 790 C662 825 680 840 695 862 C705 878 715 884 735 888 C760 892 790 896 815 902 C840 912 880 914 925 912 C960 902 1000 894 1050 882 C1090 872 1120 862 1135 845 C1150 820 1160 785 1165 755 C1170 720 1165 690 1163 660 C1160 610 1155 570 1143 530 C1135 505 1125 485 1105 472 C1070 460 1000 462 945 462 C910 462 880 466 860 470"
          stroke="#ff0000" strokeWidth="8" strokeLinecap="round" strokeLinejoin="round"
        />
      </svg>
    </div>
  );
}
